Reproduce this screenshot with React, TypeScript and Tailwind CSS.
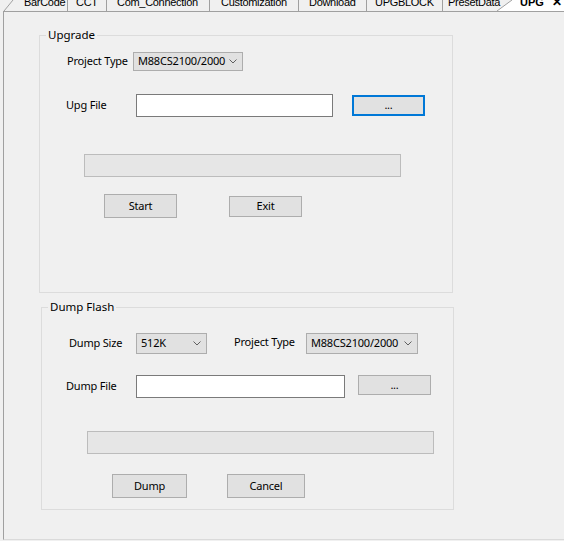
const Chevron = () => (
  <svg width="8" height="5" viewBox="0 0 8 5" className="shrink-0">
    <path d="M0.5 0.5 L4 4 L7.5 0.5" fill="none" stroke="#606060" strokeWidth="1" />
  </svg>
)

const Combo = ({ value, className }: { value: string; className: string }) => (
  <div className={`flex items-center pl-[4px] pr-[5px] bg-[#e1e1e1] border border-[#adadad] whitespace-nowrap ${className}`}>
    <span>{value}</span>
    <span className="ml-auto pl-[2px]">
      <Chevron />
    </span>
  </div>
)

const Btn = ({ label, className, focused = false }: { label: string; className: string; focused?: boolean }) => (
  <div
    className={`flex items-center justify-center bg-[#e1e1e1] ${
      focused ? "border-2 border-[#0078d7]" : "border border-[#adadad]"
    } ${className}`}
  >
    {label}
  </div>
)

const TextBox = ({ className }: { className: string }) => (
  <div className={`bg-white border border-[#7a7a7a] ${className}`} />
)

const Progress = ({ className }: { className: string }) => (
  <div className={`bg-[#e6e6e6] border border-[#bcbcbc] ${className}`} />
)

const tabs = [
  { label: "BarCode", w: "w-[65px]", pl: "pl-[21px]" },
  { label: "CCT", w: "w-[39px]", pl: "pl-[8px]" },
  { label: "Com_Connection", w: "w-[103px]", pl: "pl-[10px]" },
  { label: "Customization", w: "w-[89px]", pl: "pl-[11px]" },
  { label: "Download", w: "w-[68px]", pl: "pl-[10px]" },
  { label: "UPGBLOCK", w: "w-[76px]", pl: "pl-[8px]" },
  { label: "PresetData", w: "w-[54px]", pl: "pl-[5px]" },
]

export default function App() {
  return (
    <div className="w-[564px] h-[541px] bg-[#f0f0f0] overflow-hidden text-[11px] tracking-[-0.2px] text-black font-['Noto_Sans',sans-serif]">
      {/* tab strip, scrolled so labels are cut at the top */}
      <div className="flex h-[11px] ml-[3px] text-[11px] tracking-[-0.3px] font-['Liberation_Sans',Arial,sans-serif]">
        {tabs.map((t, i) => (
          <div
            key={t.label}
            className={`relative h-[11px] shrink-0 overflow-visible whitespace-nowrap ${t.w} ${t.pl} ${
              i < tabs.length - 1 ? "border-r border-[#a0a0a0]" : ""
            }`}
          >
            {i === 0 && (
              <svg width="12" height="11" className="absolute left-0 top-0">
                <path d="M1 11 L10 0" stroke="#a0a0a0" strokeWidth="1" />
              </svg>
            )}
            <div className="leading-[12px] -mt-[4px]">{t.label}</div>
          </div>
        ))}
        <div className="relative z-10 flex-1 h-[11px] overflow-hidden">
          <svg width="70" height="11" className="absolute left-0 top-0">
            <path d="M0 11 L15 0 L70 0 L70 11 Z" fill="#ffffff" />
            <path d="M0 11 L15 0" stroke="#a0a0a0" strokeWidth="1" />
          </svg>
          <div className="relative flex items-start pl-[23px] leading-[12px] -mt-[4px] font-bold tracking-normal whitespace-nowrap">
            <span>UPG</span>
            <span className="ml-[8px] text-[12px]">✕</span>
          </div>
        </div>
      </div>

      <div className="ml-[3px] h-[529px] border-t border-l border-b border-t-[#a0a0a0] border-l-[#a0a0a0] border-b-[#dadada] overflow-hidden">
        {/* Upgrade */}
        <fieldset className="mt-[15px] ml-[35px] w-[414px] h-[266px] border border-[#dcdcdc]">
          <legend className="ml-[6px] px-[2px] leading-[16px] text-[11.5px] tracking-normal">Upgrade</legend>
          <div className="mt-[9px] ml-[27px] flex items-center">
            <span className="w-[66px]">Project Type</span>
            <Combo value="M88CS2100/2000" className="w-[110px] h-[19px]" />
          </div>
          <div className="mt-[23px] flex items-center">
            <span className="ml-[26px] w-[70px]">Upg File</span>
            <TextBox className="w-[197px] h-[23px]" />
            <Btn label="..." focused className="ml-[19px] w-[73px] h-[21px]" />
          </div>
          <Progress className="mt-[37px] ml-[44px] w-[317px] h-[23px]" />
          <div className="mt-[17px] flex items-start">
            <Btn label="Start" className="ml-[64px] w-[73px] h-[24px]" />
            <Btn label="Exit" className="ml-[52px] mt-[2px] w-[73px] h-[21px]" />
          </div>
        </fieldset>

        {/* Dump Flash */}
        <fieldset className="mt-[6px] ml-[37px] w-[413px] h-[211px] border border-[#dcdcdc]">
          <legend className="ml-[6px] px-[2px] leading-[16px] text-[11.5px] tracking-normal">Dump Flash</legend>
          <div className="mt-[18px] flex items-center">
            <span className="ml-[27px] w-[67px]">Dump Size</span>
            <Combo value="512K" className="w-[71px] h-[21px]" />
            <span className="ml-[27px] w-[72px] -mt-[2px]">Project Type</span>
            <Combo value="M88CS2100/2000" className="w-[112px] h-[21px]" />
          </div>
          <div className="mt-[21px] flex items-center">
            <span className="ml-[24px] w-[70px]">Dump File</span>
            <TextBox className="w-[209px] h-[23px]" />
            <Btn label="..." className="ml-[13px] w-[73px] h-[20px] self-start" />
          </div>
          <Progress className="mt-[33px] ml-[45px] w-[347px] h-[23px]" />
          <div className="mt-[20px] flex">
            <Btn label="Dump" className="ml-[70px] w-[75px] h-[24px]" />
            <Btn label="Cancel" className="ml-[40px] w-[78px] h-[24px]" />
          </div>
        </fieldset>
      </div>
    </div>
  )
}
